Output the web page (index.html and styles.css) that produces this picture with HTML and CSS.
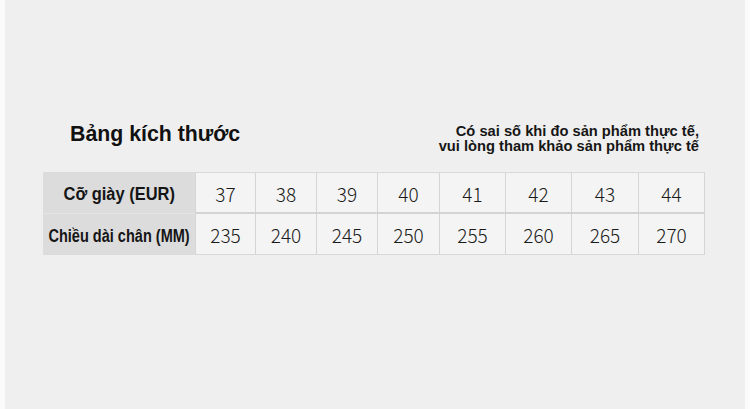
FILE: index.html
```html
<!DOCTYPE html>
<html lang="vi">
<head>
<meta charset="utf-8">
<title>Bảng kích thước</title>
<link rel="stylesheet" href="styles.css">
</head>
<body>
<div class="page">
  <main class="canvas">
    <header class="head">
      <h1 class="title">Bảng kích thước</h1>
      <p class="note">Có sai số khi đo sản phẩm thực tế,<br>vui lòng tham khảo sản phẩm thực tế</p>
    </header>
    <div class="size-table">
      <div class="label r1"><span class="big">Cỡ giày (EUR)</span></div>
      <div class="num r1">37</div>
      <div class="num r1">38</div>
      <div class="num r1">39</div>
      <div class="num r1">40</div>
      <div class="num r1">41</div>
      <div class="num r1">42</div>
      <div class="num r1">43</div>
      <div class="num r1 last">44</div>
      <div class="label r2"><span class="narrow">Chiều dài chân (MM)</span></div>
      <div class="num r2">235</div>
      <div class="num r2">240</div>
      <div class="num r2">245</div>
      <div class="num r2">250</div>
      <div class="num r2">255</div>
      <div class="num r2">260</div>
      <div class="num r2">265</div>
      <div class="num r2 last">270</div>
    </div>
  </main>
</div>
</body>
</html>
```
FILE: styles.css
```css
* { box-sizing: border-box; }
html, body { margin: 0; padding: 0; background: #fbfbfb; }
.page {
  width: 750px;
  height: 409px;
  padding: 0 5px 0 5px;
  display: flex;
  background: #fbfbfb;
}
.canvas {
  flex: 1;
  background: #efefef;
  padding-top: 122px;
}
.head {
  display: flex;
  justify-content: space-between;
  align-items: flex-start;
  padding: 0 46px 0 65px;
  height: 31px;
}
.title {
  margin: 0;
  font-family: "Liberation Sans", Arial, sans-serif;
  font-weight: 700;
  font-size: 21.3px;
  line-height: 24px;
  color: #111;
}
.note {
  margin: 2px 0 0 0;
  text-align: right;
  font-family: "Liberation Sans", Arial, sans-serif;
  font-weight: 700;
  font-size: 14.7px;
  line-height: 15px;
  color: #161616;
}
.size-table {
  margin: 19px 0 0 38px;
  display: grid;
  grid-template-columns: 152px 60px 61px 61px 62px 66px 66px 67px 67px;
  grid-template-rows: 42px 41px;
}
.label {
  background: #dcdcdc;
  display: flex;
  align-items: center;
  justify-content: center;
  white-space: nowrap;
  font-family: "Liberation Sans", Arial, sans-serif;
  font-weight: 700;
  font-size: 17.5px;
  color: #151515;
  padding-top: 3px;
  overflow: hidden;
}
.label.r1 { border-bottom: 1px solid #e4e4e4; }
.big {
  display: inline-block;
  transform: scaleX(0.94);
}
.narrow {
  display: inline-block;
  transform: scaleX(0.83);
}
.num {
  background: #f4f4f4;
  border-left: 1px solid #d5d5d5;
  display: flex;
  align-items: center;
  justify-content: center;
  font-family: "Noto Sans CJK SC", "Noto Sans", sans-serif;
  font-weight: 300;
  font-size: 19px;
  line-height: 1;
  color: #1a1a1a;
  padding-top: 1px;
}
.num.r1 { border-top: 1px solid #d8d8d8; border-bottom: 2px solid #d3d3d3; }
.num.r2 { border-bottom: 1px solid #d8d8d8; }
.num.last { border-right: 1px solid #d5d5d5; }
```
